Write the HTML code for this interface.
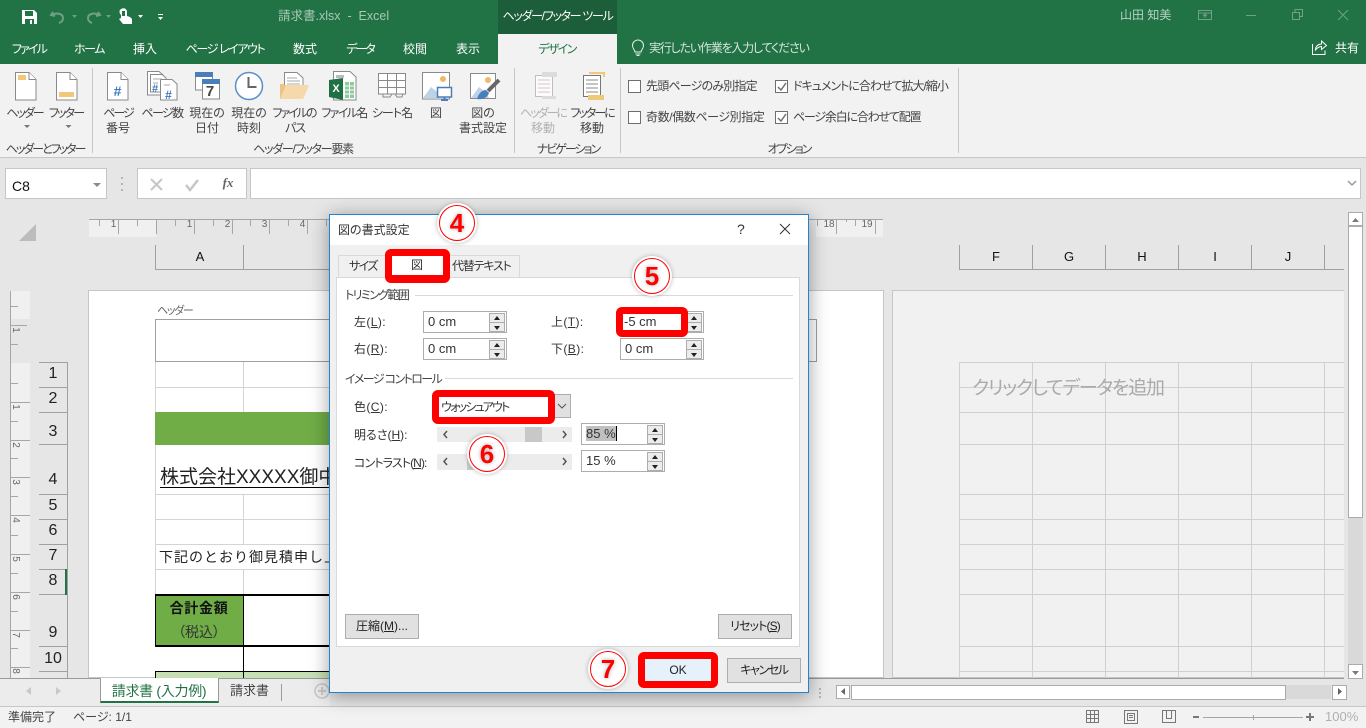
<!DOCTYPE html>
<html lang="ja"><head><meta charset="utf-8"><title>請求書.xlsx - Excel</title>
<style>
html,body{margin:0;padding:0}
body{position:relative;width:1366px;height:728px;overflow:hidden;background:#e6e6e6;font-family:"Liberation Sans","Noto Sans CJK JP",sans-serif;font-size:12px;color:#444;font-feature-settings:"palt"}
.b{position:absolute;box-sizing:border-box}
.t{position:absolute;white-space:nowrap;line-height:16px;height:16px}
.c{transform:translateX(-50%)}
svg{position:absolute;left:0;top:0}
.w{color:#fff}
.k{color:#222}
.inp{position:absolute;box-sizing:border-box;width:84px;height:22px;background:#fff;border:1px solid #adadad;padding-left:4px;line-height:19px;font-size:13px;color:#333}
.sp{position:absolute;box-sizing:border-box;width:16px;height:10px;background:#ececec;border:1px solid #adadad}
.sp:after{content:"";position:absolute;left:4px;border-left:3px solid transparent;border-right:3px solid transparent}
.up:after{top:2px;border-bottom:4px solid #222}
.dn:after{top:3px;border-top:4px solid #222}
.btn{position:absolute;box-sizing:border-box;height:25px;width:74px;background:#e1e1e1;border:1px solid #adadad;text-align:center;line-height:23px;color:#222}
.red{position:absolute;box-sizing:border-box;border:7px solid #f00;border-radius:6px;background:#fff}
.num{position:absolute;width:40px;height:40px;border-radius:50%;background:#fff;box-shadow:0 0 4px rgba(120,120,120,.55);font:bold 26px/40px "Liberation Sans",sans-serif;color:#f00;text-align:center;text-shadow:0 0 4px #aaa}
.num:before{content:"";position:absolute;left:2px;top:2px;width:34px;height:34px;border:1px solid #f00;border-radius:50%}
.r{font-size:16px;color:#222;line-height:18px;height:18px}
.h{font-size:13px;color:#111}
.k1{letter-spacing:-1px}.k12{letter-spacing:-1.2px}.k14{letter-spacing:-1.4px}.k16{letter-spacing:-1.6px}.k18{letter-spacing:-1.8px}.k2{letter-spacing:-2px}
</style></head><body>

<!-- chrome backgrounds -->
<div class="b" style="left:0;top:0;width:1366px;height:64px;background:#217346"></div>
<div class="b" style="left:498px;top:0;width:119px;height:34px;background:#1b5e39"></div>
<div class="b" style="left:498px;top:34px;width:119px;height:30px;background:#f2f2f2"></div>
<div class="b" style="left:0;top:64px;width:1366px;height:94px;background:#f2f2f2;border-bottom:1px solid #c6c6c6"></div>
<div class="b" style="left:5px;top:168px;width:102px;height:31px;background:#fff;border:1px solid #c6c6c6"></div>
<div class="b" style="left:137px;top:168px;width:110px;height:31px;background:#fff;border:1px solid #c6c6c6"></div>
<div class="b" style="left:250px;top:168px;width:1111px;height:31px;background:#fff;border:1px solid #c6c6c6"></div>

<!-- sheet backgrounds -->
<div class="b" style="left:88px;top:290px;width:796px;height:388px;background:#fff;border:1px solid #c6c6c6"></div>
<div class="b" style="left:892px;top:290px;width:452px;height:388px;background:#f1f1f1;border:1px solid #c6c6c6;border-right:0"></div>
<div class="b" style="left:89px;top:219px;width:67px;height:18px;background:#f0f0f0"></div>
<div class="b" style="left:816px;top:219px;width:67px;height:18px;background:#f0f0f0"></div>
<div class="b" style="left:11px;top:291px;width:19px;height:28px;background:#f0f0f0"></div>
<div class="b" style="left:11px;top:363px;width:19px;height:315px;background:#f0f0f0"></div>
<div class="b" style="left:155px;top:412px;width:180px;height:33px;background:#70ad47"></div>
<div class="b" style="left:155px;top:595px;width:88px;height:51px;background:#70ad47"></div>
<div class="b" style="left:155px;top:672px;width:180px;height:6px;background:#c6e0b4"></div>

<svg width="1366" height="728" viewBox="0 0 1366 728" shape-rendering="crispEdges" fill="none">
<!-- ruler -->
<path stroke="#a6a6a6" d="M89 219.500H330M800 219.500H883M118.500 219V234M156.500 219V234M194.500 219V234M232.500 219V234M269.500 219V234M307.500 219V234M836.500 219V234M875.500 219V234M99.500 220V226M137.500 220V226M175.500 220V226M213.500 220V226M250.500 220V226M288.500 220V226M326.500 220V226M817.500 220V226M855.500 220V226M846.500 220V222"/>
<path stroke="#a6a6a6" d="M10.500 291V678M10 325.500H27M10 402.500H30M10 440.500H30M10 477.500H30M10 515.500H30M10 554.500H30M10 592.500H30M10 630.500H30M10 667.500H30M10 306.500H18M10 344.500H18M10 383.500H18M10 421.500H18M10 458.500H18M10 496.500H18M10 535.500H18M10 573.500H18M10 611.500H18M10 648.500H18"/>
<!-- corner -->
<path fill="#bcbcbc" stroke="none" shape-rendering="auto" d="M19 241L36 224V241Z"/>
<!-- col headers -->
<path stroke="#a0a0a0" d="M155 269.500H330M959 269.500H1344M155.500 245V270M243.500 245V270M959.500 245V270M1032.500 245V270M1105.500 245V270M1178.500 245V270M1251.500 245V270M1324.500 245V270"/>
<!-- row headers -->
<path stroke="#a0a0a0" d="M39 362.500H67M39 387.500H67M39 412.500H67M39 444.500H67M39 494.500H67M39 519.500H67M39 544.500H67M39 569.500H67M39 594.500H67M39 646.500H67M39 671.500H67M67.500 362V678"/>
<path stroke="#217346" stroke-width="2" d="M66 569V595"/>
<!-- page1 grid -->
<path stroke="#d4d4d4" d="M155 387.500H330M155 494.500H330M155 519.500H330M155 544.500H330M155 569.500H330M155 671.500H330M243.500 362V412M243.500 494V544M243.500 570V594M243.500 647V671M155.500 362V412M155.500 445V594"/>
<path stroke="#a0a0a0" d="M155.500 319.500H816.500V361.500H155.500Z"/>
<path stroke="#000" stroke-width="2" d="M155 595H330M155 646H330"/>
<path stroke="#000" d="M155.500 595V646M243.500 595V678M155 671.500H330M155.500 671V678"/>
<path stroke="#000" d="M160 487.500H330"/>
<!-- page2 grid -->
<path stroke="#d0d0d0" d="M959 362.500H1344M959 387.500H1344M959 412.500H1344M959 444.500H1344M959 494.500H1344M959 519.500H1344M959 544.500H1344M959 569.500H1344M959 594.500H1344M959 646.500H1344M959 671.500H1344M959.500 362V678M1032.500 362V678M1105.500 362V678M1178.500 362V678M1251.500 362V678M1324.500 362V678"/>
<!-- sheet bottom -->
<path stroke="#9a9a9a" d="M0 678.500H1344"/>
<!-- ribbon separators -->
<path stroke="#c6c6c6" d="M92.500 68V153M514.500 68V153M620.500 68V153M958.500 68V153"/>
<!-- check boxes -->
<path stroke="#6e6e6e" fill="#fff" d="M628.500 80.500H640.500V92.500H628.500ZM628.500 111.500H640.500V123.500H628.500ZM775.500 80.500H787.500V92.500H775.500ZM775.500 111.500H787.500V123.500H775.500Z"/>
</svg>

<svg width="1366" height="728" viewBox="0 0 1366 728" fill="none">
<!-- QAT -->
<path fill="#fff" d="M22 10h12l3 3v11H22z"/><path fill="#217346" d="M25 11h8v5h-8zM25 19h9v5h-9z"/><path fill="#fff" d="M30 20h2v4h-2z"/>
<path stroke="#6f9f85" stroke-width="2" d="M53 12l-2 3 4 1M52 15c5-3 11-1 11 3 0 2-1 4-4 5"/>
<path fill="#6f9f85" d="M72 15h5l-2.500 3z"/>
<path stroke="#6f9f85" stroke-width="2" d="M98 12l2 3-4 1M99 15c-5-3-11-1-11 3 0 2 1 4 4 5"/>
<path fill="#6f9f85" d="M106 15h5l-2.500 3z"/>
<path fill="#fff" d="M121 9c3-2 6 0 6 3v4l3 1 2 2v5h-9l-4-5 2-1v-3c-2-2-2-5 0-6z"/><path fill="#217346" d="M122 11h3v5h-3z"/>
<path fill="#fff" d="M138 15h5l-2.500 3zM158 17h5l-2.500 3z"/><path stroke="#fff" d="M158 14.500h5"/>
<!-- window ctrl -->
<path stroke="#6fa287" d="M1198.500 10.500h13v9h-13zM1198.500 13h13M1205 18v-4M1203 16l2-2 2 2M1246 15.500h10M1292.500 12.500h7v7h-7zM1295 12v-2.500h7.500v7H1300M1338 10l10 10M1348 10l-10 10"/>
<!-- share -->
<path stroke="#fff" d="M1312.500 44v10.500h12.500v-4M1315.500 50c0-4 3-6 6-6v-3l5 4.500-5 4v-3c-2 0-4 1-6 3.500z"/>
<!-- bulb -->
<path stroke="#e6efe9" d="M635 52c0-2-2.500-3-2.500-6.500a5.500 5.500 0 0 1 11 0c0 3.500-2.500 4.500-2.500 6.500zM635.500 54h5M636.500 55.500h3"/>

<!-- ribbon icons -->
<g stroke="#8a8a8a" fill="#fff">
<path d="M15.500 72.500H29L36 79.500V100H15.500Z"/><path d="M29 72.500V79.500H36"/>
<path d="M56.500 72.500H70L77 79.500V100H56.500Z"/><path d="M70 72.500V79.500H77"/>
<path d="M107.500 72.500H121L128 79.500V100H107.500Z"/><path d="M121 72.500V79.500H128"/>
<path d="M147.500 71.500H159L163 75V95H147.500Z"/><path d="M150.500 74.500H162L166 78V92H150.500Z"/><path d="M160.500 79.500H172L177 84V100H160.500Z"/>
<path d="M195.500 72.500H212.500V90H195.500Z"/><path d="M202.500 79.500H219.500V99H202.500Z"/>
<path d="M284.500 72.500H297L303 78V92H284.500Z"/>
<path d="M333.500 71.500H350L356 77V100H333.500Z"/>
<path d="M378.500 73.500H405.500V94H378.500Z"/>
<path d="M422.500 72.500H449.500V99H422.500Z"/>
<path d="M470.500 73.500H495.500V98.500H470.500Z"/>
</g>
<path fill="#f0c878" d="M18 75h8v5h-8zM59 92h15v5H59z"/>
<path fill="#4a7ebb" d="M195 72h18v5h-18zM202 79h18v5h-18z"/>
<circle cx="249" cy="86" r="13.500" stroke="#5b8fc7" stroke-width="1.500" fill="#fff"/>
<path stroke="#666" stroke-width="2" d="M248.500 77v10h8"/>
<path stroke="#aaa" d="M287 78h10M287 81h13M287 84h13M153 79h9M153 83h5M164 85h6"/>
<path fill="#eec383" d="M280 84h3l2 1h24l-6 14H280z"/><path fill="#f6d9ab" d="M280 99l6-14h23l-6 14z"/>
<path fill="#1e7145" d="M329 80l14-2v22l-14-3z"/>
<path fill="#8ccb9b" d="M345 82h9v16h-9z"/><path stroke="#fff" d="M345 86h9M345 90h9M345 94h9M349.500 82v16"/>
<path fill="#bbb" d="M336 75h8v3h-8z"/>
<path stroke="#8a8a8a" d="M378 80.500h28M378 87.500h28M387.500 73v21M396.500 73v21M383 94v3h7l2-3M395 94l2 3h5l1-3"/>
<circle cx="443" cy="79" r="3" fill="#f0b966"/><path fill="#bcd2e6" d="M423 98l8-11 5 4 5 7z"/>
<path fill="#fff" stroke="#4a7ebb" stroke-width="1.500" d="M437.500 87.500h14v9.500h-14z"/><path stroke="#4a7ebb" stroke-width="2" d="M444.500 97v2M441 100h7"/>
<circle cx="488" cy="80" r="3" fill="#f0b966"/><path fill="#bcd2e6" d="M471 98l8-11 5 4 5 7z"/>
<path stroke="#666" stroke-width="4" d="M499 80l-11 11"/><path fill="#4a7ebb" d="M477 99c1-5 5-9 9-9l3 3c-1 4-6 7-12 6z"/>
<path stroke="#bfbfbf" fill="#fbfbfb" d="M535.500 75.500h17v21h-17z"/><path fill="#dcdcdc" d="M542 72h15v5h-15zM542 96h14v3h-14z"/><path stroke="#d0c3d0" d="M538 80h12M538 84h12M538 88h12M538 92h12"/>
<path stroke="#777" fill="#fff" d="M583.500 75.500h17v21h-17z"/><path fill="#f0c878" d="M589 72h16v2h-16zM603 72h2v5h-2zM588 95h16v5h-16z"/><path stroke="#888" d="M586 80h12M586 84h12M586 88h12M586 92h12"/>
<!-- ribbon drop arrows -->
<path fill="#777" d="M24 125h6l-3 3zM65.500 125h6l-3 3z"/>
<!-- checks -->
<path stroke="#6e6e6e" stroke-width="1.500" d="M778 87l3 3 5-7M778 118l3 3 5-7"/>
<!-- formula bar -->
<path fill="#8a8a8a" d="M93 183h8l-4 4z"/><path fill="#b5b5b5" d="M121 177h2v2h-2zM121 183h2v2h-2zM121 189h2v2h-2z"/>
<path stroke="#c6c6c6" stroke-width="2" d="M151 179l11 11M162 179l-11 11"/><path stroke="#c6c6c6" stroke-width="2.500" d="M186 185l4 5 8-10"/>
<path stroke="#999" stroke-width="1.500" d="M1348 181l4 4 4-4"/>
</svg>

<!-- title bar text -->
<span class="t" style="left:278px;top:8px;color:#a7c9b5;font-size:12.500px">請求書.xlsx&nbsp; - &nbsp;Excel</span>
<span class="t w c" style="left:557.500px;top:8px;letter-spacing:-1.3px">ヘッダー/フッター ツール</span>
<span class="t" style="left:1120px;top:7px;color:#b7d2c3">山田 知美</span>
<span class="t w c k18" style="left:29px;top:41px">ファイル</span>
<span class="t w c k14" style="left:89px;top:41px">ホーム</span>
<span class="t w c" style="left:145px;top:41px">挿入</span>
<span class="t w c k14" style="left:225px;top:41px">ページ レイアウト</span>
<span class="t w c" style="left:305px;top:41px">数式</span>
<span class="t w c k2" style="left:360px;top:41px">データ</span>
<span class="t w c" style="left:415px;top:41px">校閲</span>
<span class="t w c" style="left:468px;top:41px">表示</span>
<span class="t c k16" style="left:557px;top:41px;color:#217346">デザイン</span>
<span class="t k12" style="left:649px;top:40px;color:#d5e6dc">実行したい作業を入力してください</span>
<span class="t w" style="left:1335px;top:40px">共有</span>

<!-- ribbon labels -->
<span class="t c k2" style="left:24.500px;top:105px">ヘッダー</span>
<span class="t c k18" style="left:66px;top:105px">フッター</span>
<span class="t c k2" style="left:118px;top:105px">ページ</span><span class="t c" style="left:118px;top:120px">番号</span>
<span class="t c k16" style="left:162px;top:105px">ページ数</span>
<span class="t c" style="left:207px;top:105px">現在の</span><span class="t c" style="left:207px;top:120px">日付</span>
<span class="t c" style="left:249px;top:105px">現在の</span><span class="t c" style="left:249px;top:120px">時刻</span>
<span class="t c k2" style="left:294px;top:105px">ファイルの</span><span class="t c k1" style="left:295px;top:120px">パス</span>
<span class="t c k16" style="left:344px;top:105px">ファイル名</span>
<span class="t c k1" style="left:392px;top:105px">シート名</span>
<span class="t c" style="left:436px;top:105px">図</span>
<span class="t c" style="left:483px;top:105px">図の</span><span class="t c" style="left:483px;top:120px">書式設定</span>
<span class="t c k2" style="left:543px;top:105px;color:#b1b1b1">ヘッダーに</span><span class="t c" style="left:543px;top:120px;color:#b1b1b1">移動</span>
<span class="t c k2" style="left:592px;top:105px">フッターに</span><span class="t c" style="left:592px;top:120px">移動</span>
<span class="t" style="left:646px;top:78px;letter-spacing:-.8px">先頭ページのみ別指定</span>
<span class="t" style="left:646px;top:109px;letter-spacing:-.4px">奇数/偶数ページ別指定</span>
<span class="t k1" style="left:793px;top:78px">ドキュメントに合わせて拡大/縮小</span>
<span class="t k12" style="left:793px;top:109px">ページ余白に合わせて配置</span>
<span class="t c k2" style="left:45px;top:141px">ヘッダーとフッター</span>
<span class="t c" style="left:303px;top:141px;letter-spacing:-1.25px">ヘッダー/フッター要素</span>
<span class="t c k2" style="left:568px;top:141px">ナビゲーション</span>
<span class="t c k2" style="left:789px;top:141px">オプション</span>
<span class="t c" style="left:117.500px;top:83px;color:#3c78b8;font:bold 14px/16px 'Liberation Sans',sans-serif">#</span>
<span class="t c" style="left:155px;top:81px;color:#3c78b8;font:bold 11px/16px 'Liberation Sans',sans-serif">#</span>
<span class="t c" style="left:168.500px;top:87px;color:#3c78b8;font:bold 12px/16px 'Liberation Sans',sans-serif">#</span>
<span class="t c" style="left:210px;top:84px;color:#444;font:bold 15px/16px 'Liberation Sans',sans-serif">7</span>
<span class="t c" style="left:336px;top:81px;color:#fff;font:bold 11px/16px 'Liberation Sans',sans-serif">X</span>

<!-- formula bar text -->
<span class="t" style="left:12px;top:178px;color:#111;font-size:14px">C8</span>
<span class="t c" style="left:228px;top:175px;color:#666;font:italic bold 13px/16px 'Liberation Serif',serif">fx</span>

<!-- rulers numbers -->
<span class="t c" style="left:113.500px;top:217px;font-size:10px;color:#666">1</span>
<span class="t c" style="left:189.500px;top:217px;font-size:10px;color:#666">1</span>
<span class="t c" style="left:227.500px;top:217px;font-size:10px;color:#666">2</span>
<span class="t c" style="left:264.500px;top:217px;font-size:10px;color:#666">3</span>
<span class="t c" style="left:302.500px;top:217px;font-size:10px;color:#666">4</span>
<span class="t c" style="left:829px;top:217px;font-size:10px;color:#666">18</span>
<span class="t c" style="left:867px;top:217px;font-size:10px;color:#666">19</span>
<span class="t" style="left:12px;top:322px;font-size:10px;color:#666;transform:rotate(90deg)">1</span>
<span class="t" style="left:12px;top:399px;font-size:10px;color:#666;transform:rotate(90deg)">1</span>
<span class="t" style="left:12px;top:437px;font-size:10px;color:#666;transform:rotate(90deg)">2</span>
<span class="t" style="left:12px;top:474px;font-size:10px;color:#666;transform:rotate(90deg)">3</span>
<span class="t" style="left:12px;top:512px;font-size:10px;color:#666;transform:rotate(90deg)">4</span>
<span class="t" style="left:12px;top:551px;font-size:10px;color:#666;transform:rotate(90deg)">5</span>
<span class="t" style="left:12px;top:589px;font-size:10px;color:#666;transform:rotate(90deg)">6</span>
<span class="t" style="left:12px;top:627px;font-size:10px;color:#666;transform:rotate(90deg)">7</span>
<span class="t" style="left:12px;top:663px;font-size:10px;color:#666;transform:rotate(90deg)">8</span>

<!-- headers -->
<span class="t h c" style="left:200px;top:249px">A</span>
<span class="t h c" style="left:996px;top:249px">F</span>
<span class="t h c" style="left:1069px;top:249px">G</span>
<span class="t h c" style="left:1142px;top:249px">H</span>
<span class="t h c" style="left:1215px;top:249px">I</span>
<span class="t h c" style="left:1288px;top:249px">J</span>
<span class="t r c" style="left:53px;top:365px">1</span>
<span class="t r c" style="left:53px;top:390px">2</span>
<span class="t r c" style="left:53px;top:423px">3</span>
<span class="t r c" style="left:53px;top:471px">4</span>
<span class="t r c" style="left:53px;top:497px">5</span>
<span class="t r c" style="left:53px;top:522px">6</span>
<span class="t r c" style="left:53px;top:547px">7</span>
<span class="t r c" style="left:53px;top:572px">8</span>
<span class="t r c" style="left:53px;top:624px">9</span>
<span class="t r c" style="left:53px;top:650px">10</span>

<!-- sheet text -->
<span class="t" style="left:157px;top:303px;font-size:11px;color:#666;letter-spacing:-1.300px">ヘッダー</span>
<div class="b" style="left:160px;top:465px;width:170px;height:24px;overflow:hidden"><span class="t k" style="left:0;top:2px;font-size:19px;line-height:22px;height:22px;font-feature-settings:normal">株式会社XXXXX御中</span></div>
<div class="b" style="left:159px;top:546px;width:171px;height:22px;overflow:hidden"><span class="t k" style="left:0;top:2px;font-size:14px;line-height:18px;height:18px;letter-spacing:1px;font-feature-settings:normal">下記のとおり御見積申し上げます</span></div>
<span class="t c" style="left:199px;top:600px;font-size:14px;font-weight:bold;color:#111;letter-spacing:.7px">合計金額</span>
<span class="t c" style="left:199px;top:624px;font-size:14px;color:#333">（税込）</span>
<span class="t k12" style="left:972px;top:378px;font-size:19px;line-height:22px;height:22px;color:#aaa">クリックしてデータを追加</span>

<!-- v scrollbar -->
<div class="b" style="left:1348px;top:212px;width:15px;height:467px;background:#d9d9d9"></div>
<div class="b" style="left:1348px;top:212px;width:15px;height:14px;background:#fff;border:1px solid #ababab"></div>
<div class="b" style="left:1348px;top:226px;width:15px;height:292px;background:#fff;border:1px solid #ababab"></div>
<div class="b" style="left:1348px;top:664px;width:15px;height:15px;background:#fff;border:1px solid #ababab"></div>
<svg width="1366" height="728" viewBox="0 0 1366 728"><path fill="#7a7a7a" d="M1352 222l3.500-4 3.500 4zM1352 671h7l-3.500 4z"/></svg>

<!-- tab bar -->
<div class="b" style="left:0;top:678px;width:330px;height:29px;background:#ececec;border-top:1px solid #9a9a9a"></div>
<div class="b" style="left:100px;top:678px;width:119px;height:25px;background:#fff;border:1px solid #9a9a9a;border-top:0;border-bottom:2px solid #217346"></div>
<div class="b" style="left:281px;top:684px;width:1px;height:17px;background:#9a9a9a"></div>
<span class="t c" style="left:159px;top:683px;font-size:14px;color:#217346;letter-spacing:-.3px">請求書 (入力例)</span>
<span class="t c" style="left:249.500px;top:683px;font-size:13px;color:#444">請求書</span>
<svg width="1366" height="728" viewBox="0 0 1366 728" fill="none"><path fill="#c8c8c8" d="M31 687l-5 4 5 4zM56 687l5 4-5 4z"/><circle cx="322" cy="691" r="7" stroke="#c8c8c8" stroke-width="1.500"/><path stroke="#c8c8c8" stroke-width="2" d="M322 687v8M318 691h8"/></svg>

<!-- h scrollbar -->
<div class="b" style="left:851px;top:685px;width:480px;height:14px;background:#d9d9d9"></div>
<div class="b" style="left:836px;top:685px;width:14px;height:14px;background:#fff;border:1px solid #ababab"></div>
<div class="b" style="left:851px;top:685px;width:435px;height:15px;background:#fff;border:1px solid #ababab"></div>
<div class="b" style="left:1332px;top:685px;width:15px;height:15px;background:#fff;border:1px solid #ababab"></div>
<svg width="1366" height="728" viewBox="0 0 1366 728"><path fill="#666" d="M845 688v7l-4-3.500zM1338 688v7l4-3.500z"/><path fill="#b5b5b5" d="M819 688h2v2h-2zM819 692h2v2h-2zM819 696h2v2h-2z"/></svg>

<!-- status bar -->
<div class="b" style="left:0;top:706px;width:1366px;height:22px;background:#f2f2f2;border-top:1px solid #c6c6c6"></div>
<span class="t" style="left:8px;top:709px;color:#444">準備完了</span>
<span class="t" style="left:73px;top:709px;color:#444">ページ: 1/1</span>
<svg width="1366" height="728" viewBox="0 0 1366 728" fill="none" shape-rendering="crispEdges"><path stroke="#777" d="M1086.500 710.500h12v12h-12zM1086 714.500h13M1086 718.500h13M1090.500 710v13M1094.500 710v13M1124.500 710.500h13v13h-13zM1127.500 713.500h7v7h-7zM1129 715.500h4M1129 717.500h4M1162.500 710.500h13v12h-13zM1166.500 710v8.500h5V710"/><path stroke="#a6a6a6" d="M1203 717.500h100M1253.500 715v5"/><path stroke="#777" stroke-width="2" d="M1193 717h6M1306 717h8M1310 713v8"/></svg>
<span class="t" style="left:1325px;top:709px;font-size:13px;color:#b0b0b0">100%</span>

<!-- dialog -->
<div class="b" style="left:329px;top:214px;width:480px;height:479px;background:#f0f0f0;border:1px solid #1f83d8;box-shadow:0 3px 18px rgba(0,0,0,.38)"></div>
<div class="b" style="left:330px;top:215px;width:478px;height:30px;background:#fff"></div>
<span class="t" style="left:338px;top:222px;color:#333">図の書式設定</span>
<span class="t" style="left:737px;top:221px;color:#333;font-size:14px">?</span>
<svg width="1366" height="728" viewBox="0 0 1366 728" fill="none"><path stroke="#333" d="M780 224l10 10M790 224l-10 10"/></svg>
<div class="b" style="left:338px;top:255px;width:50px;height:23px;background:#f0f0f0;border:1px solid #d9d9d9;border-bottom:0"></div>
<div class="b" style="left:448px;top:255px;width:72px;height:23px;background:#f0f0f0;border:1px solid #d9d9d9;border-bottom:0"></div>
<div class="b" style="left:336px;top:277px;width:464px;height:370px;background:#fff;border:1px solid #d9d9d9"></div>
<span class="t k16" style="left:349px;top:258px;color:#333">サイズ</span>
<span class="t k12" style="left:452px;top:258px;color:#333">代替テキスト</span>
<div class="red" style="left:385px;top:249px;width:65px;height:34px;border-bottom-width:8px"></div>
<span class="t c" style="left:417px;top:257px;color:#333">図</span>

<span class="t k16" style="left:345px;top:287px;color:#444">トリミング範囲</span>
<div class="b" style="left:415px;top:295px;width:378px;height:1px;background:#d9d9d9"></div>
<span class="t k16" style="left:345px;top:371px;color:#444">イメージ コントロール</span>
<div class="b" style="left:445px;top:378px;width:348px;height:1px;background:#d9d9d9"></div>

<span class="t" style="left:354px;top:314px;color:#333;letter-spacing:.4px">左(<u>L</u>):</span>
<span class="t" style="left:354px;top:341px;color:#333;letter-spacing:.4px">右(<u>R</u>):</span>
<span class="t" style="left:551px;top:314px;color:#333;letter-spacing:.4px">上(<u>T</u>):</span>
<span class="t" style="left:551px;top:341px;color:#333;letter-spacing:.4px">下(<u>B</u>):</span>
<span class="t" style="left:354px;top:399px;color:#333;letter-spacing:.4px">色(<u>C</u>):</span>
<span class="t" style="left:354px;top:427px;color:#333">明るさ(<u>H</u>):</span>
<span class="t" style="left:354px;top:455px;color:#333;letter-spacing:-.9px">コントラスト(<u>N</u>):</span>

<div class="inp" style="left:423px;top:311px">0 cm</div><div class="sp up" style="left:489px;top:313px"></div><div class="sp dn" style="left:489px;top:322px"></div>
<div class="inp" style="left:423px;top:338px">0 cm</div><div class="sp up" style="left:489px;top:340px"></div><div class="sp dn" style="left:489px;top:349px"></div>
<div class="inp" style="left:620px;top:311px"></div><div class="sp up" style="left:686px;top:313px"></div><div class="sp dn" style="left:686px;top:322px"></div>
<div class="inp" style="left:620px;top:338px">0 cm</div><div class="sp up" style="left:686px;top:340px"></div><div class="sp dn" style="left:686px;top:349px"></div>
<div class="red" style="left:616px;top:307px;width:72px;height:30px"></div>
<span class="t" style="left:624px;top:314px;font-size:13px;color:#333">-5 cm</span>

<div class="b" style="left:550px;top:394px;width:21px;height:24px;background:#e1e1e1;border:1px solid #adadad"></div>
<svg width="1366" height="728" viewBox="0 0 1366 728" fill="none"><path stroke="#555" d="M558 404l4 4 4-4"/></svg>
<div class="red" style="left:432px;top:390px;width:123px;height:34px"></div>
<span class="t k18" style="left:441px;top:399px;color:#333">ウォッシュアウト</span>

<div class="b" style="left:437px;top:427px;width:135px;height:15px;background:#ececec"></div>
<div class="b" style="left:525px;top:427px;width:17px;height:15px;background:#c8c8c8"></div>
<div class="b" style="left:437px;top:454px;width:135px;height:16px;background:#ececec"></div>
<div class="b" style="left:467px;top:454px;width:17px;height:16px;background:#c8c8c8"></div>
<svg width="1366" height="728" viewBox="0 0 1366 728" fill="none"><path stroke="#555" stroke-width="1.500" d="M447 431l-3 3.500 3 3.500M563 431l3 3.500-3 3.500M447 458l-3 3.500 3 3.500M563 458l3 3.500-3 3.500"/></svg>

<div class="inp" style="left:581px;top:423px"><span style="background:#c0c0c0;color:#333">85 %</span><span style="border-left:1px solid #000"></span></div><div class="sp up" style="left:647px;top:425px"></div><div class="sp dn" style="left:647px;top:434px"></div>
<div class="inp" style="left:581px;top:450px">15 %</div><div class="sp up" style="left:647px;top:452px"></div><div class="sp dn" style="left:647px;top:461px"></div>

<div class="btn" style="left:345px;top:614px">圧縮(<u>M</u>)...</div>
<div class="btn" style="left:718px;top:614px;letter-spacing:-.9px">リセット(<u>S</u>)</div>
<div class="btn k14" style="left:727px;top:658px">キャンセル</div>
<div class="red" style="left:638px;top:652px;width:80px;height:36px;background:#e5f1fb;text-align:center;line-height:22px;color:#222">OK</div>

<div class="num" style="left:437px;top:203px">4</div>
<div class="num" style="left:632px;top:256px">5</div>
<div class="num" style="left:467px;top:434px">6</div>
<div class="num" style="left:588px;top:649px">7</div>
</body></html>
